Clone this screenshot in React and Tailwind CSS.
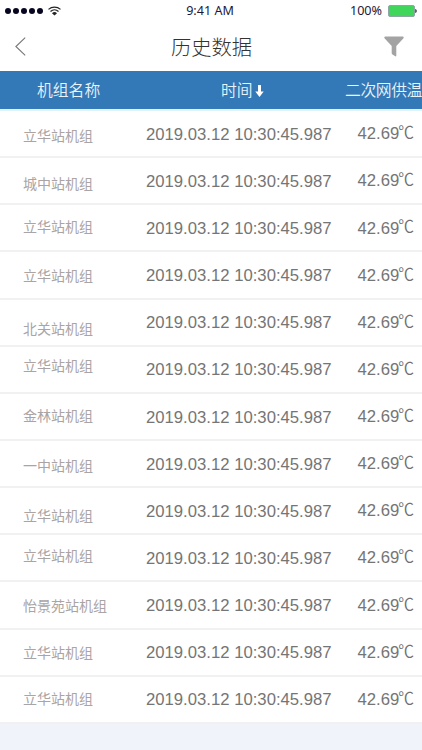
const records = [
  { name: '立华站机组', shift: 'pt-[3px]' },
  { name: '城中站机组', shift: 'pt-[5px]' },
  { name: '立华站机组', shift: 'pb-[4px]' },
  { name: '立华站机组', shift: 'pt-[1px]' },
  { name: '北关站机组', shift: 'pt-[11px]' },
  { name: '立华站机组', shift: 'pb-[9px]' },
  { name: '金林站机组', shift: 'pb-[3px]' },
  { name: '一中站机组', shift: 'pt-[2px]' },
  { name: '立华站机组', shift: 'pt-[8px]' },
  { name: '立华站机组', shift: 'pb-[5px]' },
  { name: '怡景苑站机组', shift: 'pt-0' },
  { name: '立华站机组', shift: 'pb-[1px]' },
  { name: '立华站机组', shift: 'pb-[2px]' },
]

function StatusBar() {
  return (
    <div className="grid h-[22px] grid-cols-3 items-center font-['Noto_Sans',sans-serif] text-[12.6px] text-[#1c1839]">
      <div className="flex items-center gap-[5px] pl-[5px]">
        <div className="flex gap-[2px]">
          {[0, 1, 2, 3, 4].map((dot) => (
            <span key={dot} className="size-[6px] rounded-full bg-[#070620]" />
          ))}
        </div>
        <svg viewBox="0 0 13 10" className="h-[10px] w-[13px]" fill="none" stroke="#242424" strokeWidth="1.2">
          <path d="M.5 3.4a9 9 0 0 1 12 0" />
          <path d="M2.5 5.5a6 6 0 0 1 8 0" />
          <path d="M6.5 9.6 4 7.2a3.6 3.6 0 0 1 5 0z" fill="#242424" stroke="none" />
        </svg>
      </div>
      <div className="pt-[1px] pr-[2px] text-center">9:41 AM</div>
      <div className="flex items-center justify-end gap-[6px] pr-[5px]">
        <span className="pt-[1px]">100%</span>
        <svg viewBox="0 0 29 12" className="h-[12px] w-[29px]">
          <rect x=".5" y=".5" width="26" height="11" rx="1.5" fill="#3fd65b" stroke="#8fa6a6" />
          <path d="M27.3 4c1.8.3 1.8 3.7 0 4z" fill="#16132f" />
        </svg>
      </div>
    </div>
  )
}

function NavBar() {
  return (
    <div className="flex h-[49px] items-center justify-between pr-[18px] pl-[15px]">
      <svg viewBox="0 0 11 19" className="h-[19px] w-[11px]" fill="none" stroke="#777" strokeWidth="1.1">
        <path d="M10.2.7.9 9.5l9.3 8.8" />
      </svg>
      <h1 className="pl-[13px] text-[20.3px] leading-none font-light text-[#333]">历史数据</h1>
      <svg viewBox="0 0 20 21" className="h-[21px] w-[20px]" fill="#a3a3a3">
        <path d="M1.2.5h17.6c1 0 1.1 1.3.5 2L12.3 10v9.7c0 .6-.5.9-1 .6l-2.8-1.8c-.5-.3-.8-.6-.8-1.2V10L.7 2.5C.1 1.8.2.5 1.2.5z" />
      </svg>
    </div>
  )
}

function TableHeader() {
  return (
    <div className="flex h-[38px] items-center bg-[#3379b7] text-[15.8px] leading-none font-[350] whitespace-nowrap text-[#e9f3fb]">
      <span className="w-[221px] shrink-0 pl-[37px]">机组名称</span>
      <span className="flex w-[124px] shrink-0 items-center gap-[2px]">
        时间
        <svg viewBox="0 0 9 12" className="mt-[2px] h-[12px] w-[9px]" fill="#fff">
          <path d="M3 0h3v6.5h2.7L4.5 12 .3 6.5H3z" />
        </svg>
      </span>
      <span className="shrink-0 tracking-[-0.4px]">二次网供温</span>
    </div>
  )
}

function RecordRow({ name, shift }) {
  return (
    <li className="flex h-[47.15px] items-center border-b-2 border-[#f1f1f2] font-['Liberation_Sans','Noto_Sans_CJK_SC',sans-serif] whitespace-nowrap text-[#757575]">
      <span
        className={`w-[146px] shrink-0 pl-[23px] font-['Noto_Sans_CJK_SC',sans-serif] text-[14px] leading-none text-[#aaa4a4] ${shift}`}
      >
        {name}
      </span>
      <span className="w-[211.5px] shrink-0 pt-[3px] text-[16.7px] leading-none">2019.03.12 10:30:45.987</span>
      <span className="flex shrink-0 items-center text-[16.7px] leading-none">
        <span className="pt-[2px]">42.69</span>
        <span className="-ml-[1px] pb-[3px] font-['Noto_Sans_CJK_SC',sans-serif] text-[15.8px] font-[350] text-[#707070]">
          ℃
        </span>
      </span>
    </li>
  )
}

export default function App() {
  return (
    <div className="flex h-[750px] w-[422px] flex-col overflow-hidden bg-[#f0f3f9] font-['Noto_Sans_CJK_SC',sans-serif]">
      <header className="bg-white">
        <StatusBar />
        <NavBar />
      </header>
      <TableHeader />
      <ul className="border-t-2 border-[#e2f3fc] bg-white">
        {records.map((record, index) => (
          <RecordRow key={index} name={record.name} shift={record.shift} />
        ))}
      </ul>
    </div>
  )
}
